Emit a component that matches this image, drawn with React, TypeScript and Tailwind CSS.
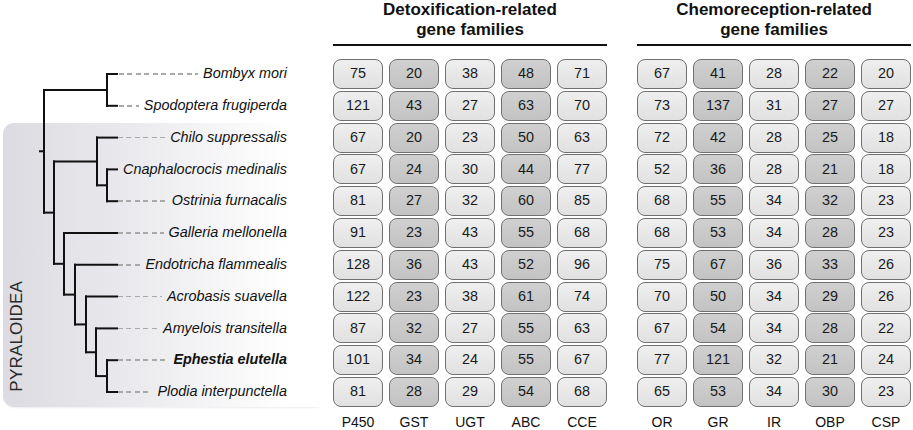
const species = [
  'Bombyx mori',
  'Spodoptera frugiperda',
  'Chilo suppressalis',
  'Cnaphalocrocis medinalis',
  'Ostrinia furnacalis',
  'Galleria mellonella',
  'Endotricha flammealis',
  'Acrobasis suavella',
  'Amyelois transitella',
  'Ephestia elutella',
  'Plodia interpunctella',
];

const detox = [
  [75, 20, 38, 48, 71],
  [121, 43, 27, 63, 70],
  [67, 20, 23, 50, 63],
  [67, 24, 30, 44, 77],
  [81, 27, 32, 60, 85],
  [91, 23, 43, 55, 68],
  [128, 36, 43, 52, 96],
  [122, 23, 38, 61, 74],
  [87, 32, 27, 55, 63],
  [101, 34, 24, 55, 67],
  [81, 28, 29, 54, 68],
];

const chemo = [
  [67, 41, 28, 22, 20],
  [73, 137, 31, 27, 27],
  [72, 42, 28, 25, 18],
  [52, 36, 28, 21, 18],
  [68, 55, 34, 32, 23],
  [68, 53, 34, 28, 23],
  [75, 67, 36, 33, 26],
  [70, 50, 34, 29, 26],
  [67, 54, 34, 28, 22],
  [77, 121, 32, 21, 24],
  [65, 53, 34, 30, 23],
];

const font = "font-['Liberation_Sans',Arial,sans-serif]";

// row centres, in page pixels
const y = (i: number) => 74 + 31.8 * i;
const TIP = 117;

const Tree = () => {
  const aMid = (y(0) + y(1)) / 2;
  const coMid = (y(3) + y(4)) / 2;
  const cMid = (y(2) + coMid) / 2;
  const hMid = (y(9) + y(10)) / 2;
  const gMid = (y(8) + hMid) / 2;
  const fMid = (y(7) + gMid) / 2;
  const eMid = (y(6) + fMid) / 2;
  const dMid = (y(5) + eMid) / 2;
  const pMid = (cMid + dMid) / 2;
  const rMid = (aMid + pMid) / 2;

  const lines: [number, number, number, number][] = [
    // root
    [40, rMid, 44, rMid],
    [44, aMid, 44, pMid],
    // Bombyx + Spodoptera
    [44, aMid, 107, aMid],
    [107, y(0), 107, y(1)],
    [107, y(0), TIP, y(0)],
    [107, y(1), TIP, y(1)],
    // Pyraloidea
    [44, pMid, 54, pMid],
    [54, cMid, 54, dMid],
    [54, cMid, 97, cMid],
    [97, y(2), 97, coMid],
    [97, y(2), TIP, y(2)],
    [97, coMid, 107, coMid],
    [107, y(3), 107, y(4)],
    [107, y(3), TIP, y(3)],
    [107, y(4), TIP, y(4)],
    [54, dMid, 64, dMid],
    [64, y(5), 64, eMid],
    [64, y(5), TIP, y(5)],
    [64, eMid, 75, eMid],
    [75, y(6), 75, fMid],
    [75, y(6), TIP, y(6)],
    [75, fMid, 86, fMid],
    [86, y(7), 86, gMid],
    [86, y(7), TIP, y(7)],
    [86, gMid, 96, gMid],
    [96, y(8), 96, hMid],
    [96, y(8), TIP, y(8)],
    [96, hMid, 107, hMid],
    [107, y(9), 107, y(10)],
    [107, y(9), TIP, y(9)],
    [107, y(10), TIP, y(10)],
  ];

  return (
    <svg className="absolute inset-0 pointer-events-none" width="320" height="430">
      {lines.map(([x1, y1, x2, y2], i) => (
        <line key={i} x1={x1} y1={y1} x2={x2} y2={y2} stroke="#111" strokeWidth="2" strokeLinecap="square" />
      ))}
    </svg>
  );
};

const SpeciesRow = ({ name, bold }: { name: string; bold?: boolean }) => (
  <div className="h-[30px] flex items-center">
    <div className="flex-1 ml-[2px] mr-[5px] h-[1.5px] bg-[repeating-linear-gradient(90deg,#a9a9a9_0_5px,transparent_5px_8.5px)]" />
    <span className={`text-[14.4px] italic text-[#111] whitespace-nowrap ${bold ? 'font-bold' : ''}`}>{name}</span>
  </div>
);

const Cell = ({ value, dark }: { value: number; dark: boolean }) => (
  <div
    className={`h-[30px] rounded-[8px] border border-[#707070] flex items-center justify-center text-[14.4px] text-[#1a1a1a] bg-linear-to-b ${
      dark ? 'from-[#d0d0d0] to-[#c3c3c3]' : 'from-[#efefef] to-[#e1e1e1]'
    }`}
  >
    {value}
  </div>
);

const Block = ({ title, data, labels, ml }: { title: string; data: number[][]; labels: string[]; ml: string }) => (
  <div className={`w-[274px] flex flex-col ${ml}`}>
    <div className="h-[46px] border-b-2 border-[#111] text-center text-[17px] leading-[20px] font-bold text-[#111]">
      {title}
      <br />
      gene families
    </div>
    <div className="mt-[13px] flex flex-col gap-[1.8px]">
      {data.map((row, r) => (
        <div key={r} className="grid grid-cols-5 gap-[6px]">
          {row.map((v, c) => (
            <Cell key={c} value={v} dark={c % 2 === 1} />
          ))}
        </div>
      ))}
    </div>
    <div className="mt-[7px] grid grid-cols-5 gap-[6px] text-center text-[14px] leading-[16px] text-[#111]">
      {labels.map((l) => (
        <span key={l}>{l}</span>
      ))}
    </div>
  </div>
);

export default function App() {
  return (
    <div className={`w-[913px] h-[430px] bg-white flex overflow-hidden ${font}`}>
      <div className="relative w-[320px] pt-[59px] flex flex-col gap-[1.8px]">
        <div className="pl-[117px] pr-[33px] flex flex-col gap-[1.8px]">
          <SpeciesRow name={species[0]} />
          <SpeciesRow name={species[1]} />
        </div>
        <div className="ml-[3px] flex rounded-l-[11px] bg-linear-to-r from-[#dbdbe1] via-[#eeeef1] via-50% to-white to-90% shadow-[0_2px_2px_-1px_rgba(0,0,0,0.07)]">
          <div className="w-[27px] flex items-end justify-center pb-[15px]">
            <span className="[writing-mode:vertical-rl] rotate-180 text-[17px] leading-none text-[#2a2a2a] tracking-[0.2px]">
              PYRALOIDEA
            </span>
          </div>
          <div className="flex-1 pl-[87px] pr-[33px] flex flex-col gap-[1.8px]">
            {species.slice(2).map((s) => (
              <SpeciesRow key={s} name={s} bold={s === 'Ephestia elutella'} />
            ))}
          </div>
        </div>
        <Tree />
      </div>
      <Block
        title="Detoxification-related"
        data={detox}
        labels={['P450', 'GST', 'UGT', 'ABC', 'CCE']}
        ml="ml-[13px]"
      />
      <Block
        title="Chemoreception-related"
        data={chemo}
        labels={['OR', 'GR', 'IR', 'OBP', 'CSP']}
        ml="ml-[30px]"
      />
    </div>
  );
}
